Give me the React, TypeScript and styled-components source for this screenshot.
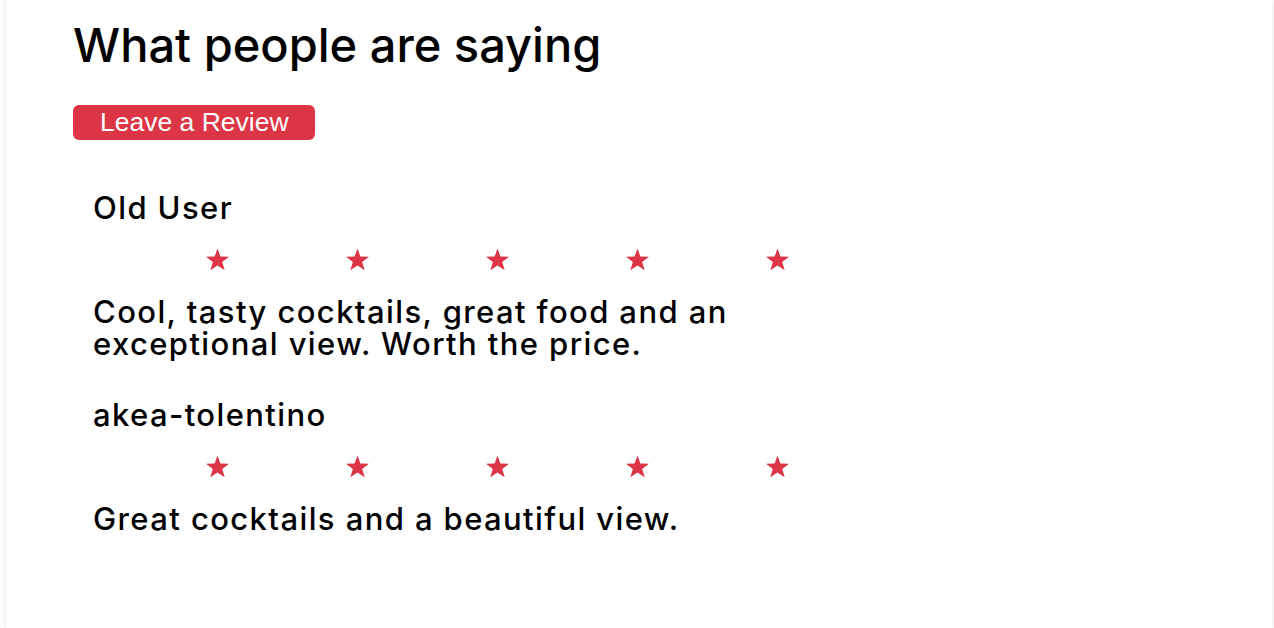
import React from "react";
import styled, { createGlobalStyle } from "styled-components";

const GlobalStyle = createGlobalStyle`
  html, body {
    margin: 0;
    padding: 0;
    background: #ffffff;
  }
  body {
    font-family: Inter, "Open Sans", sans-serif;
    color: #000000;
    overflow: hidden;
  }
`;

const Page = styled.div`
  padding: 0 2px 0 6px;
  min-height: 100vh;
  box-sizing: border-box;
  display: flex;
`;

const Card = styled.section`
  flex: 1;
  min-height: 100vh;
  background: #ffffff;
  box-shadow: 0 0 6px rgba(0, 0, 0, 0.12);
  padding: 16px 0 0 67px;
  box-sizing: border-box;
  display: flex;
  flex-direction: column;
  align-items: flex-start;
`;

const Heading = styled.h1`
  margin: 0;
  font-size: 47px;
  line-height: 57.6px;
  font-weight: 500;
  letter-spacing: 0;
`;

const ReviewButton = styled.button`
  margin-top: 31px;
  height: 35px;
  padding: 0 26px 0 27px;
  border: none;
  border-radius: 6px;
  background: #dc3545;
  color: #ffffff;
  font-family: "Liberation Sans", Arial, sans-serif;
  font-size: 26.5px;
  line-height: 35px;
  cursor: pointer;
`;

const ReviewList = styled.div`
  margin-top: 50px;
  padding-left: 20px;
  display: flex;
  flex-direction: column;
  gap: 37px;
  width: 700px;
`;

const Review = styled.article`
  display: flex;
  flex-direction: column;
`;

const Name = styled.h3`
  margin: 0;
  font-size: 31px;
  line-height: 36px;
  font-weight: 500;
  letter-spacing: 1.4px;
`;

const Stars = styled.div`
  display: flex;
  gap: 115px;
  padding-left: 112px;
  margin-top: 22px;
`;

const Text = styled.p`
  margin: 24px 0 0;
  font-size: 31px;
  line-height: 32px;
  font-weight: 500;
  letter-spacing: 1.4px;
`;

const Star = () => (
  <svg width="25" height="24" viewBox="0 0 24 23" aria-hidden="true">
    <path
      d="M12 0.5 L14.8 8.2 L23 8.4 L16.5 13.4 L18.9 21.4 L12 16.7 L5.1 21.4 L7.5 13.4 L1 8.4 L9.2 8.2 Z"
      fill="#dc3545"
    />
  </svg>
);

const reviews = [
  {
    name: "Old User",
    rating: 5,
    text: "Cool, tasty cocktails, great food and an exceptional view. Worth the price.",
  },
  {
    name: "akea-tolentino",
    rating: 5,
    text: "Great cocktails and a beautiful view.",
  },
];

export default function App() {
  return (
    <>
      <GlobalStyle />
      <Page>
        <Card>
          <Heading>What people are saying</Heading>
          <ReviewButton>Leave a Review</ReviewButton>
          <ReviewList>
            {reviews.map((r) => (
              <Review key={r.name}>
                <Name>{r.name}</Name>
                <Stars>
                  {Array.from({ length: r.rating }).map((_, i) => (
                    <Star key={i} />
                  ))}
                </Stars>
                <Text>{r.text}</Text>
              </Review>
            ))}
          </ReviewList>
        </Card>
      </Page>
    </>
  );
}
